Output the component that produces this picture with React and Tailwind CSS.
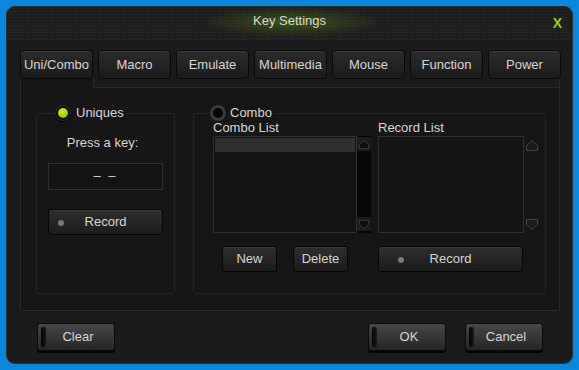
import React from "react";

function Tab({ label }) {
  return (
    <div className="w-[73px] h-[29px] rounded-[4px] border border-[#0a0a0a] bg-gradient-to-b from-[#2c2c2c] to-[#1b1b1b] shadow-[inset_0_1px_0_#3a3a3a] flex items-center justify-center text-[13px] text-[#d6d6d6]">
      {label}
    </div>
  );
}

function SmallBtn({ label, w, dot }) {
  return (
    <div
      className={`${w} relative h-[26px] rounded-[3px] border border-[#070707] bg-gradient-to-b from-[#2e2e2e] to-[#1c1c1c] shadow-[inset_0_1px_0_#3c3c3c] flex items-center justify-center text-[13px] text-[#d6d6d6]`}
    >
      {dot === "l" && <div className="absolute left-[9px] top-[10px] w-[6px] h-[6px] rounded-full bg-[#7a7a7a]" />}
      {dot === "r" && <div className="absolute left-[19px] top-[10px] w-[6px] h-[6px] rounded-full bg-[#7a7a7a]" />}
      <span>{label}</span>
    </div>
  );
}

function BigBtn({ label }) {
  return (
    <div className="w-[78px] h-[28px] rounded-[3px] border border-[#0b0b0b] bg-gradient-to-b from-[#474747] to-[#262626] shadow-[0_2px_0_#050505] flex items-center">
      <div className="ml-[3px] w-[5px] h-[20px] rounded-[2px] bg-gradient-to-r from-[#050505] to-[#1a1a1a]" />
      <div className="flex-1 text-center text-[13px] text-[#d6d6d6] pr-[4px]">{label}</div>
    </div>
  );
}

function Pent({ up }) {
  return (
    <svg width="12" height="11" viewBox="0 0 12 11">
      {up ? (
        <path d="M0.5 10.5 L0.5 5.5 L6 0.5 L11.5 5.5 L11.5 10.5 Z" fill="#1c1c1c" stroke="#444" strokeWidth="1" />
      ) : (
        <path d="M0.5 0.5 L0.5 5.5 L6 10.5 L11.5 5.5 L11.5 0.5 Z" fill="#1c1c1c" stroke="#444" strokeWidth="1" />
      )}
    </svg>
  );
}

function BoxArrow({ up }) {
  return (
    <div className="w-[14px] h-[14px] bg-[#1c1c1c] flex items-center justify-center">
      <svg width="10" height="9" viewBox="0 0 10 9">
        {up ? (
          <path d="M0.5 8.5 L0.5 4.5 L5 0.5 L9.5 4.5 L9.5 8.5 Z" fill="#0e0e0e" stroke="#383838" strokeWidth="1" />
        ) : (
          <path d="M0.5 0.5 L0.5 4.5 L5 8.5 L9.5 4.5 L9.5 0.5 Z" fill="#0e0e0e" stroke="#383838" strokeWidth="1" />
        )}
      </svg>
    </div>
  );
}

export default function App() {
  const tabs = ["Uni/Combo", "Macro", "Emulate", "Multimedia", "Mouse", "Function", "Power"];
  return (
    <div className="w-[579px] h-[370px] bg-[#0a86da] p-[6px] font-['Liberation_Sans',Arial,sans-serif]">
      <div className="h-full rounded-[9px] border border-[#2e2e2e] bg-[#1b1b1b] flex flex-col overflow-hidden">
        {/* Title bar */}
        <div className="relative h-[33px] shrink-0 border-b border-[#242424] bg-[#1e1e1e] bg-[radial-gradient(#2b2b2b_1px,transparent_1px)] bg-[length:3px_3px] flex items-center justify-center pb-[4px]">
          <div className="absolute left-[195px] top-[0px] w-[180px] h-[30px] rounded-full bg-[radial-gradient(ellipse_at_center,rgba(120,180,20,0.35),transparent_70%)]" />
          <span className="relative text-[13px] text-[#d3dccb]">Key Settings</span>
          <span className="absolute right-[10px] top-[9px] text-[14px] font-bold leading-none text-[#9ccd14]">X</span>
        </div>

        {/* Tabs */}
        <div className="mt-[10px] ml-[13px] flex gap-[5px]">
          {tabs.map((t) => (
            <Tab key={t} label={t} />
          ))}
        </div>

        {/* Panel */}
        <div className="ml-[13px] w-[540px] h-[232px] flex flex-col">
          <div className="h-[9px] flex">
            <div className="w-[73px] bg-[#161616] border-l border-[#2a2a2a]" />
            <div className="flex-1 border-l border-b border-r border-[#2a2a2a] rounded-tr-[3px] bg-[#1b1b1b]" />
          </div>
          <div className="flex-1 bg-[#161616] border-l border-r border-b border-[#2a2a2a] rounded-b-[3px] pl-[15px] pt-[25px] flex gap-[18px]">
            {/* Left group */}
            <div className="relative w-[139px] h-[181px] border border-[#262626] rounded-[2px] flex flex-col items-center">
              <div className="absolute left-[17px] top-[-9px] flex items-center gap-[5px] bg-[#161616] pr-[3px] pl-[1px]">
                <div className="w-[16px] h-[16px] rounded-full bg-[#0c0c0c] shadow-[0_1px_1px_#000,inset_0_0_0_1px_#2e2e2e] flex items-center justify-center">
                  <div className="w-[10px] h-[10px] rounded-full bg-[radial-gradient(circle_at_40%_35%,#c8f02a,#86b800)]" />
                </div>
                <span className="text-[13px] leading-[14px] text-[#d6d6d6]">Uniques</span>
              </div>
              <div className="mt-[19px] text-[13px] text-[#d6d6d6] pr-[6px]">Press a key:</div>
              <div className="mt-[10px] w-[115px] h-[27px] border border-[#303030] bg-[#141414] flex items-center justify-center text-[13px] text-[#d6d6d6] tracking-[2px]">
                – –
              </div>
              <div className="mt-[19px]">
                <SmallBtn label="Record" w="w-[115px]" dot="l" />
              </div>
            </div>

            {/* Right group */}
            <div className="relative w-[353px] h-[181px] border border-[#262626] rounded-[2px] pl-[19px] pt-[6px]">
              <div className="absolute left-[15px] top-[-9px] flex items-center gap-[4px] bg-[#161616] pr-[3px] pl-[1px]">
                <div className="w-[16px] h-[16px] rounded-full bg-[#050505] shadow-[inset_0_0_0_3px_#3a3a3a]" />
                <span className="text-[13px] leading-[14px] text-[#d6d6d6]">Combo</span>
              </div>
              <div className="flex gap-[7px]">
                <div className="flex flex-col">
                  <div className="h-[15px] text-[13px] leading-[15px] text-[#d6d6d6]">Combo List</div>
                  <div className="mt-[1px] flex h-[97px]">
                    <div className="w-[144px] border border-[#303030] bg-[#141414] p-[1px]">
                      <div className="h-[14px] bg-[#2f2f2f]" />
                    </div>
                    <div className="w-[14px] bg-[#060606] flex flex-col justify-between items-center pt-[1px] pb-[2px]">
                      <BoxArrow up />
                      <BoxArrow />
                    </div>
                  </div>
                  <div className="mt-[13px] pl-[9px] flex gap-[16px]">
                    <SmallBtn label="New" w="w-[55px]" />
                    <SmallBtn label="Delete" w="w-[55px]" />
                  </div>
                </div>
                <div className="flex flex-col">
                  <div className="h-[15px] text-[13px] leading-[15px] text-[#d6d6d6]">Record List</div>
                  <div className="mt-[1px] flex h-[97px]">
                    <div className="w-[146px] border border-[#303030] bg-[#141414]" />
                    <div className="w-[14px] flex flex-col justify-between items-center pl-[2px] pt-[4px] pb-[3px]">
                      <Pent up />
                      <Pent />
                    </div>
                  </div>
                  <div className="mt-[13px]">
                    <SmallBtn label="Record" w="w-[145px]" dot="r" />
                  </div>
                </div>
              </div>
            </div>
          </div>
        </div>

        {/* Bottom buttons */}
        <div className="mt-[12px] flex pl-[30px]">
          <BigBtn label="Clear" />
          <div className="ml-[253px]">
            <BigBtn label="OK" />
          </div>
          <div className="ml-[19px]">
            <BigBtn label="Cancel" />
          </div>
        </div>
      </div>
    </div>
  );
}
